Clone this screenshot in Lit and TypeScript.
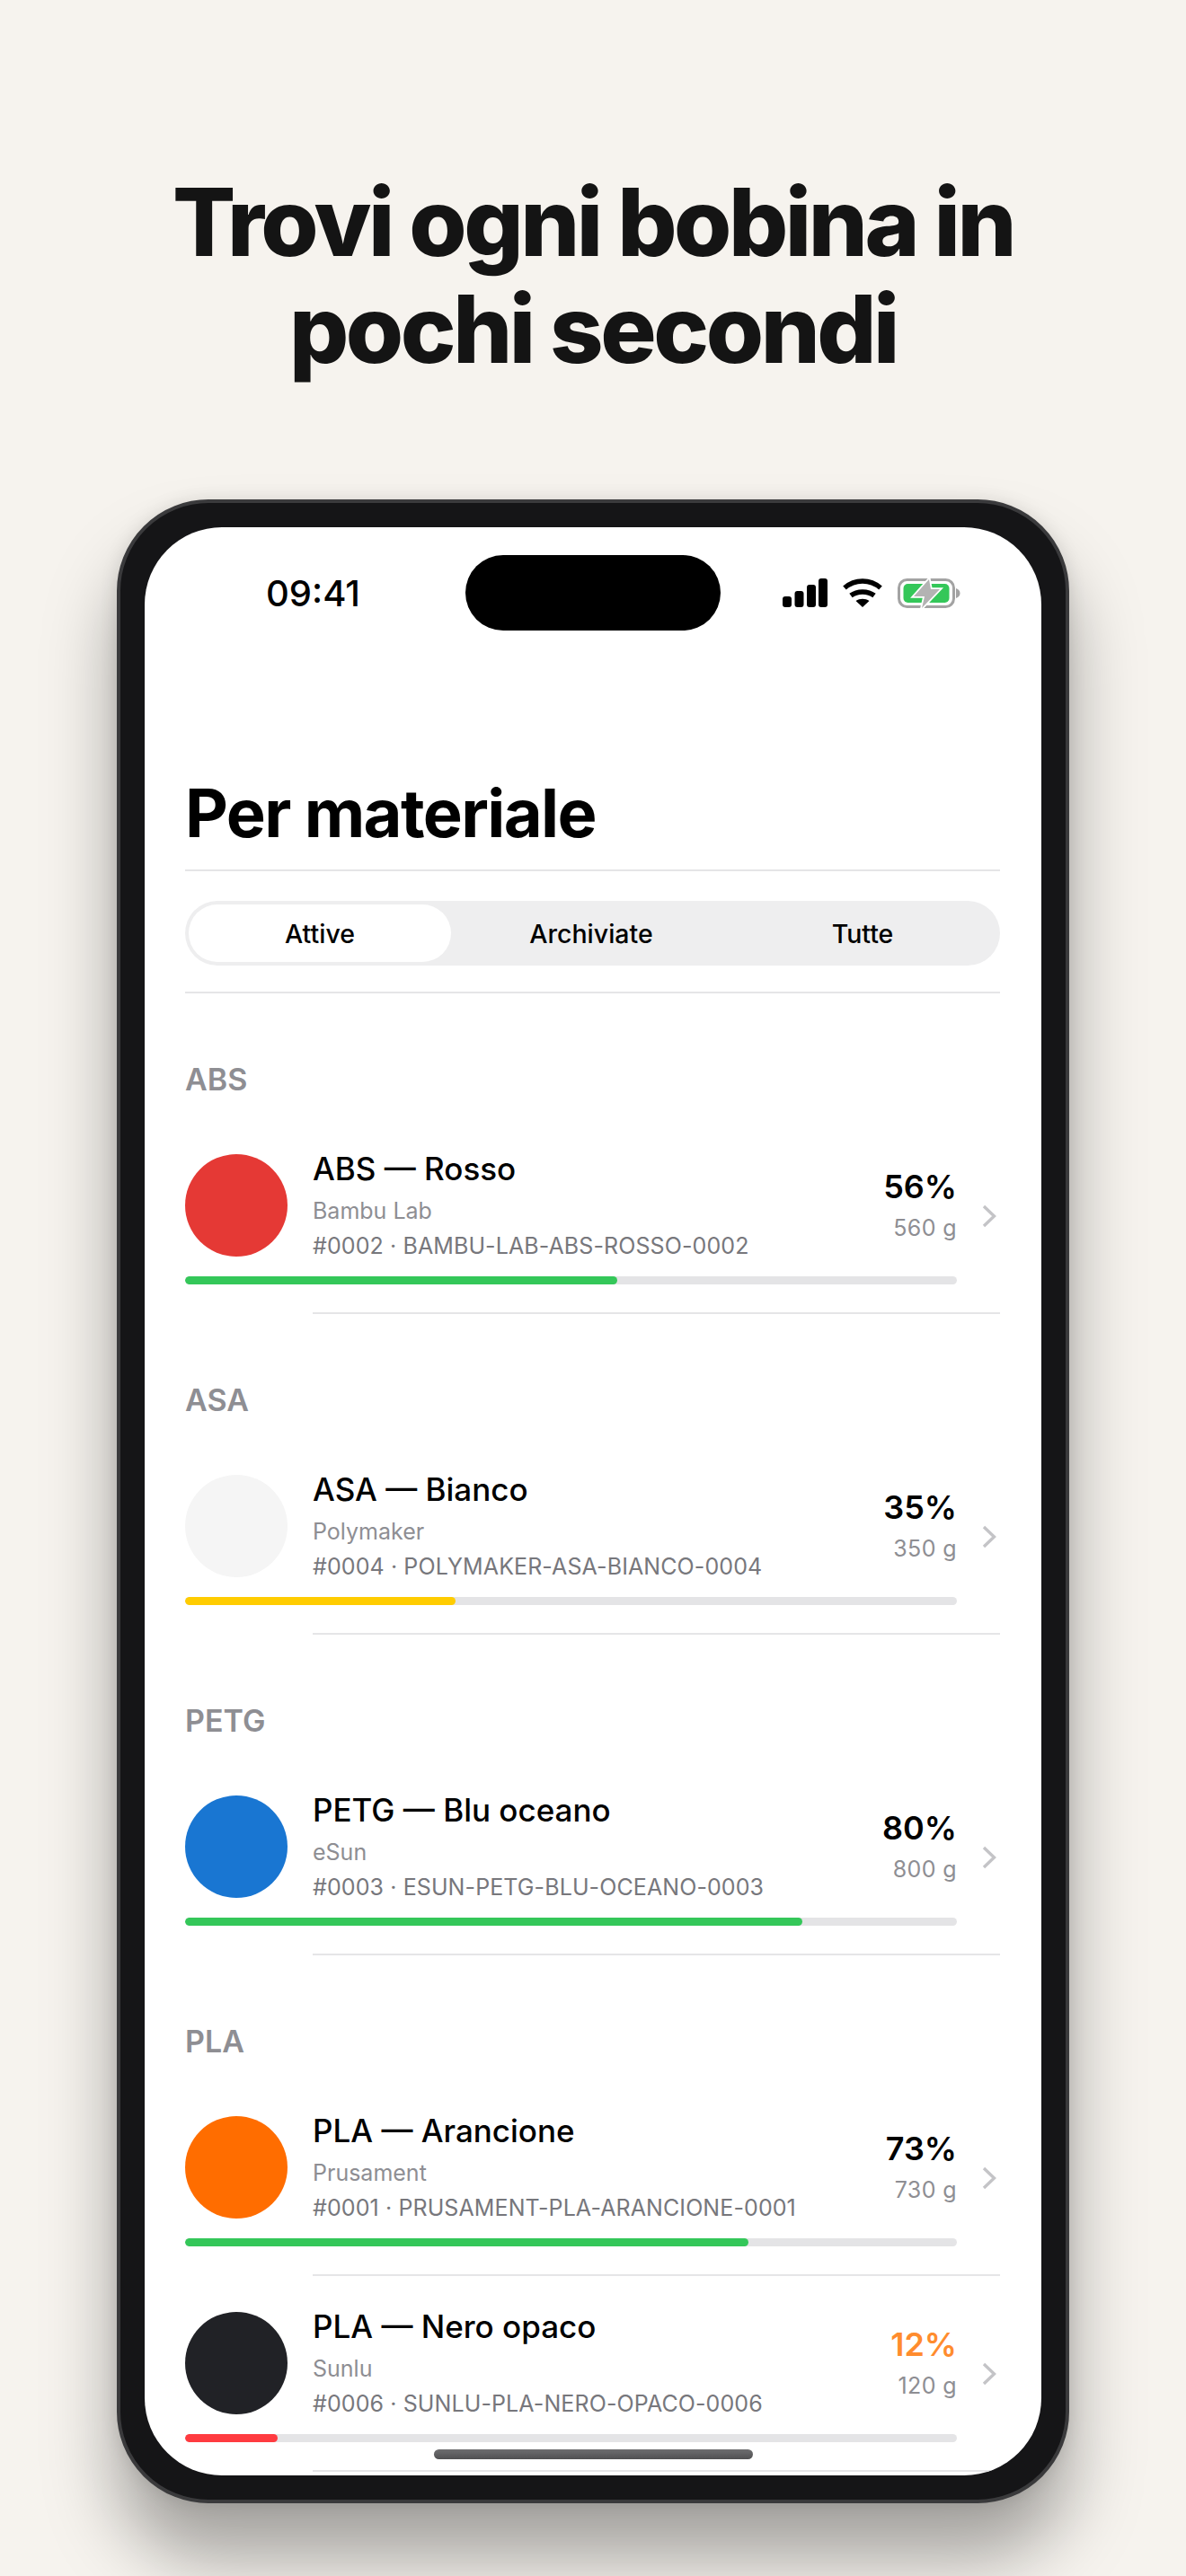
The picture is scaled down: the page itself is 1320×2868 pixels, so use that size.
import { LitElement, html, css } from "lit";
import { customElement } from "lit/decorators.js";

interface Spool { name: string; brand: string; code: string; color: string; pct: number; grams: string; bar: string; pctColor?: string; }
const sections: { title: string; items: Spool[] }[] = [
  { title: "ABS", items: [{ name: "ABS — Rosso", brand: "Bambu Lab", code: "#0002 · BAMBU-LAB-ABS-ROSSO-0002", color: "#e53935", pct: 56, grams: "560 g", bar: "#34c759" }] },
  { title: "ASA", items: [{ name: "ASA — Bianco", brand: "Polymaker", code: "#0004 · POLYMAKER-ASA-BIANCO-0004", color: "#f5f5f5", pct: 35, grams: "350 g", bar: "#ffcc00" }] },
  { title: "PETG", items: [{ name: "PETG — Blu oceano", brand: "eSun", code: "#0003 · ESUN-PETG-BLU-OCEANO-0003", color: "#1976d2", pct: 80, grams: "800 g", bar: "#34c759" }] },
  { title: "PLA", items: [
    { name: "PLA — Arancione", brand: "Prusament", code: "#0001 · PRUSAMENT-PLA-ARANCIONE-0001", color: "#ff6d00", pct: 73, grams: "730 g", bar: "#34c759" },
    { name: "PLA — Nero opaco", brand: "Sunlu", code: "#0006 · SUNLU-PLA-NERO-OPACO-0006", color: "#212226", pct: 12, grams: "120 g", bar: "#ff3b40", pctColor: "#ff8c2e" },
  ] },
];

@customElement("app-root")
export class AppRoot extends LitElement {
  static styles = css`
    :host { display: block; width: 1320px; height: 2868px; overflow: hidden; background: #f6f3ee; font-family: Inter, "Liberation Sans", sans-serif; color: #000; }
    .title { margin: 0; padding-top: 188px; text-align: center; font-size: 104px; line-height: 119px; font-weight: 760; letter-spacing: -3.45px; color: #141414; }
    .phone { box-sizing: border-box; width: 1060px; height: 2231px; margin: 130px auto 0; padding: 27px; border: 4px solid #3a3a3c; border-radius: 102px; background: #151517; box-shadow: 0 60px 80px rgba(0,0,0,.34), 0 0 20px rgba(0,0,0,.1); }
    .screen { position: relative; height: 100%; border-radius: 86px; background: #fff; overflow: hidden; display: flex; flex-direction: column; }
    .status { flex: none; height: 120px; display: flex; align-items: flex-start; justify-content: space-between; padding: 0 88px 0 135px; }
    .time { font-size: 40px; line-height: 48px; font-weight: 500; margin-top: 50px; }
    .island { position: absolute; left: 357px; top: 31px; width: 284px; height: 84px; border-radius: 42px; background: #000; }
    .icons { display: flex; gap: 17px; margin-top: 57px; align-items: flex-start; }
    .icons svg { display: block; }
    .content { padding: 153px 46px 0 45px; }
    h1 { margin: 0; font-size: 74px; line-height: 90px; font-weight: 700; letter-spacing: -1.6px; }
    .rule { height: 2px; background: #e5e5e7; }
    h1 + .rule { margin-top: 18px; }
    .seg { margin: 33px 0 29px; height: 72px; box-sizing: border-box; padding: 4px; border-radius: 36px; background: #eeeeef; display: grid; grid-template-columns: repeat(3, 292px); column-gap: 10px; }
    .seg div { display: flex; align-items: center; justify-content: center; font-size: 28.5px; font-weight: 500; border-radius: 32px; }
    .seg .on { background: #fff; }
    .section { box-sizing: border-box; font-size: 34px; line-height: 44px; font-weight: 600; color: #8e8e93; padding-top: 74px; height: 139px; }
    .row { display: flex; align-items: center; height: 218px; box-sizing: border-box; position: relative; padding-top: 39px; }
    .row .sep { position: absolute; left: 142px; right: 0; bottom: 0; height: 2px; background: #e5e5e7; }
    .body { width: 859px; }
    .main { display: flex; align-items: flex-start; height: 113px; }
    .dot { flex: none; width: 114px; height: 114px; border-radius: 50%; margin-right: 28px; }
    .info { flex: 1; min-width: 0; }
    .name { font-size: 35px; line-height: 42px; font-weight: 500; margin-top: -4.6px; }
    .brand { font-size: 25px; line-height: 30px; color: #8e8e93; margin-top: 10.6px; }
    .code { font-size: 25px; line-height: 30px; color: #77777c; margin-top: 8.6px; letter-spacing: .1px; }
    .right { text-align: right; padding-top: 13.6px; }
    .pct { font-size: 36px; line-height: 44px; font-weight: 600; }
    .g { font-size: 25px; line-height: 32px; color: #8e8e93; margin-top: 8.4px; letter-spacing: .4px; }
    .bar { height: 9px; border-radius: 5px; background: #e4e4e6; margin-top: 23px; margin-bottom: 32px; overflow: hidden; }
    .bar div { height: 100%; border-radius: 5px; }
    .chev { flex: none; margin-left: 28px; margin-top: -38.5px; display: block; }
    .home { position: absolute; left: 322px; width: 355px; bottom: 18px; height: 11px; border-radius: 6px; background: linear-gradient(#6e6e70, #505052); }
  `;

  private row(s: Spool) {
    return html`<div class="row">
      <div class="body">
        <div class="main">
          <div class="dot" style="background:${s.color}"></div>
          <div class="info">
            <div class="name">${s.name}</div>
            <div class="brand">${s.brand}</div>
            <div class="code">${s.code}</div>
          </div>
          <div class="right">
            <div class="pct" style=${s.pctColor ? `color:${s.pctColor}` : ""}>${s.pct}%</div>
            <div class="g">${s.grams}</div>
          </div>
        </div>
        <div class="bar"><div style="width:${s.pct}%;background:${s.bar}"></div></div>
      </div>
      <svg class="chev" width="16" height="26" viewBox="0 0 16 26" fill="none"><path d="M2 2l11.5 11L2 24" stroke="#c4c4c7" stroke-width="3.4"/></svg>
      <div class="sep"></div>
    </div>`;
  }

  render() {
    return html`
      <h2 class="title">Trovi ogni bobina in<br />pochi secondi</h2>
      <div class="phone">
        <div class="screen">
          <div class="status">
            <div class="time">09:41</div>
            <div class="icons">
              <svg width="50" height="32" viewBox="0 0 50 32"><rect x="0" y="20" width="10" height="12" rx="3"/><rect x="13.5" y="14" width="10" height="18" rx="3"/><rect x="27" y="7" width="10" height="25" rx="3"/><rect x="40" y="0" width="10" height="32" rx="3"/></svg>
              <svg width="44" height="32" viewBox="0 0 44 32"><path d="M2 10.5C13.5.5 30.5.5 42 10.5" fill="none" stroke="#000" stroke-width="5.5"/><path d="M9 19c7-5.5 19-5.5 26 0" fill="none" stroke="#000" stroke-width="5.5"/><path d="M22 32l-7.5-7c4.5-3 10.5-3 15 0z"/></svg>
              <svg width="72" height="34" viewBox="0 0 72 34"><rect x="1.5" y="1.5" width="61" height="30" rx="9" fill="none" stroke="#a3a3a3" stroke-width="3"/><rect x="6.5" y="6" width="51" height="21" rx="5" fill="#34c759"/><path d="M65 11c3 1 4.5 3 4.5 5.5S68 21 65 22z" fill="#a3a3a3"/><path d="M35 1L18 20h12l-3 13 20-21H37z" fill="#b3b3b3" stroke="#fff" stroke-width="3.5" paint-order="stroke"/></svg>
            </div>
          </div>
          <div class="island"></div>
          <div class="content">
            <h1>Per materiale</h1>
            <div class="rule"></div>
            <div class="seg"><div class="on">Attive</div><div>Archiviate</div><div>Tutte</div></div>
            <div class="rule"></div>
            ${sections.map((sec) => html`<div class="section">${sec.title}</div>${sec.items.map((i) => this.row(i))}`)}
          </div>
          <div class="home"></div>
        </div>
      </div>
    `;
  }
}
